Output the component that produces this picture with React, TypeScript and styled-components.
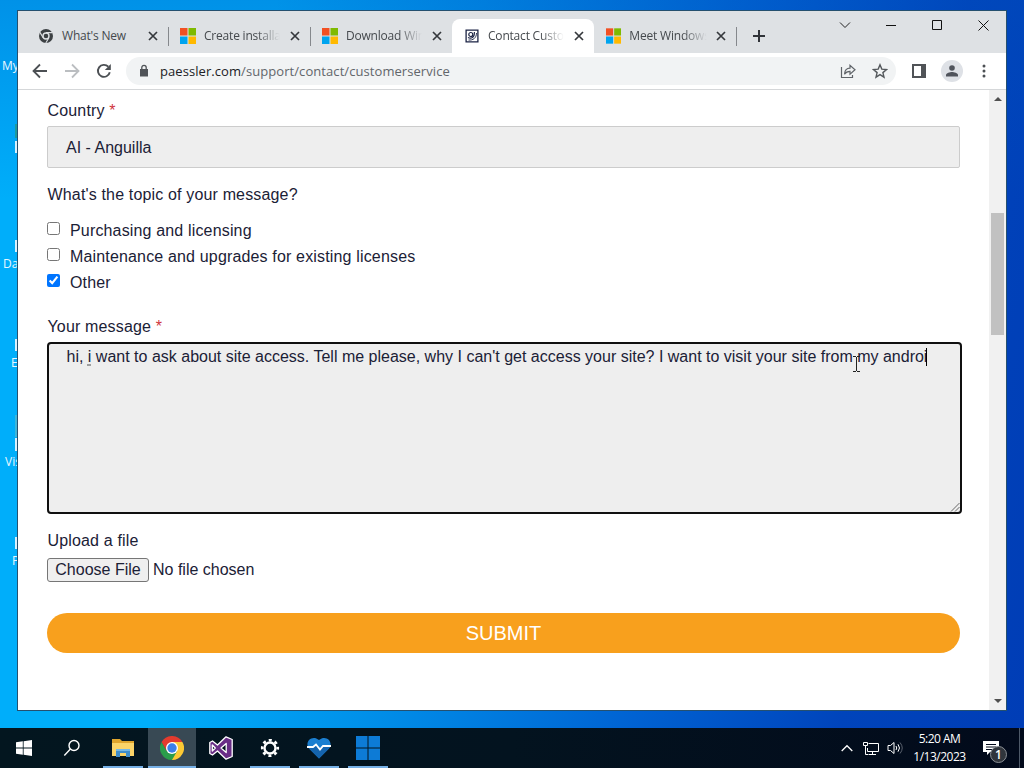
import React from 'react';
import styled, { createGlobalStyle } from 'styled-components';

const GlobalStyle = createGlobalStyle`
  * {
    box-sizing: border-box;
  }
  body {
    margin: 0;
    overflow: hidden;
  }
`;

const uiFont = "'Open Sans', 'Noto Sans', sans-serif";
const pageFont = "'Liberation Sans', Arial, sans-serif";

const Screen = styled.div`
  display: flex;
  flex-direction: column;
  width: 1024px;
  height: 768px;
  overflow: hidden;
  font-family: ${uiFont};
`;

const Desktop = styled.div`
  position: relative;
  display: flex;
  height: 728px;
  padding: 10px 17px 17px 17px;
  background:
    linear-gradient(180deg, rgba(0, 80, 190, 0.3), rgba(0, 120, 230, 0) 200px),
    linear-gradient(100deg, #00aefa 0%, #00aefa 24%, #0091ea 42%, #0062d2 66%, #0044bb 84%, #003db6 100%);
`;

const DesktopLabel = styled.span<{ $x: number; $y: number }>`
  position: absolute;
  left: ${p => p.$x}px;
  top: ${p => p.$y}px;
  font-size: 12px;
  line-height: 16px;
  color: #e8f7ff;
`;

const DesktopIcon = styled.span<{ $y: number; $h: number; $color?: string }>`
  position: absolute;
  left: 15px;
  top: ${p => p.$y}px;
  width: 2px;
  height: ${p => p.$h}px;
  background: ${p => p.$color || '#d9f1fd'};
`;

const Window = styled.div`
  position: relative;
  display: flex;
  flex-direction: column;
  width: 990px;
  height: 701px;
  border: 1px solid #25506f;
  background: #fff;
`;

const TabStrip = styled.div`
  display: flex;
  height: 42px;
  padding-left: 8px;
  background: #dee1e4;
`;

const Tab = styled.div<{ $active?: boolean; $divider?: boolean }>`
  position: relative;
  display: flex;
  align-items: center;
  width: 142px;
  height: 34px;
  margin-top: 8px;
  padding: 0 7px 0 12px;
  border-radius: 8px 8px 0 0;
  background: ${p => (p.$active ? '#fff' : 'transparent')};

  &::after {
    content: '';
    position: absolute;
    right: -1px;
    top: 8px;
    width: 1px;
    height: 19px;
    background: ${p => (p.$divider ? '#85888c' : 'transparent')};
  }
`;

const TabTitle = styled.span<{ $fade?: boolean }>`
  flex: 1;
  margin-left: 8px;
  white-space: nowrap;
  font-size: 12px;
  line-height: 18px;
  letter-spacing: -0.2px;
  color: #45494d;
  mask-image: ${p => (p.$fade ? 'linear-gradient(90deg, #000 66%, transparent 96%)' : 'none')};
`;

const TabClose = styled.span`
  display: flex;
  justify-content: center;
  width: 16px;
  margin-left: 4px;
`;

const NewTab = styled.div`
  display: flex;
  align-items: center;
  justify-content: center;
  width: 46px;
  height: 34px;
  margin-top: 8px;
`;

const WindowControls = styled.div`
  display: flex;
  margin-left: auto;
  height: 28px;
`;

const WindowButton = styled.span`
  display: flex;
  align-items: center;
  justify-content: center;
  width: 46px;
`;

const Toolbar = styled.div`
  display: flex;
  align-items: center;
  height: 37px;
  padding: 0 6px;
  border-bottom: 1px solid #d5d7d9;
`;

const ToolButton = styled.span<{ $w?: number }>`
  display: flex;
  align-items: center;
  justify-content: center;
  width: ${p => p.$w || 32}px;
  height: 32px;
`;

const AddressBar = styled.div`
  display: flex;
  align-items: center;
  width: 770px;
  height: 28px;
  margin: 0 4px 0 6px;
  padding: 0 0 0 11px;
  border-radius: 14px;
  background: #f1f3f4;
`;

const Url = styled.span`
  flex: 1;
  margin-left: 9px;
  font-size: 13px;
  line-height: 20px;
  letter-spacing: 0.07px;
  color: #62666b;

  b {
    font-weight: 400;
    color: #202124;
  }
`;

const Avatar = styled.span`
  display: flex;
  align-items: center;
  justify-content: center;
  width: 22px;
  height: 22px;
  margin: 0 5px 0 4px;
  border-radius: 50%;
  background: #dee1e6;
`;

const Viewport = styled.div`
  display: flex;
  flex: 1;
`;

const Form = styled.div`
  flex: 1;
  padding: 9px 27px 0 29px;
  font-family: ${pageFont};
  font-size: 16px;
  line-height: 24px;
  color: #1b2136;
`;

const Label = styled.div<{ $top?: number }>`
  margin-top: ${p => p.$top || 0}px;
  padding-left: 0.5px;
  letter-spacing: 0.16px;

  i {
    font-style: normal;
    color: #d0353d;
  }
`;

const Select = styled.div`
  width: 913px;
  height: 42px;
  margin-top: 3px;
  padding: 0 18px;
  border: 1px solid #ccc;
  border-radius: 2px;
  background: #eee;
  line-height: 42px;
`;

const Options = styled.div`
  margin-top: 11px;
`;

const Option = styled.label`
  display: flex;
  height: 26px;
  line-height: 26px;
  letter-spacing: 0.16px;

  input {
    width: 13px;
    height: 13px;
    margin: 4px 10px 0 0;
  }
`;

const Message = styled.div`
  position: relative;
  width: 915px;
  height: 172px;
  margin-top: 3px;
  padding: 1px 17.5px 0;
  border: 2px solid #101010;
  border-radius: 4px;
  background: #eee;
  white-space: nowrap;

  u {
    text-decoration: underline dotted #8a8a8a;
    text-underline-offset: 3px;
  }
`;

const Caret = styled.span`
  display: inline-block;
  width: 1px;
  height: 18px;
  margin-left: -1px;
  vertical-align: -4px;
  background: #000;
`;

const Grip = styled.svg`
  position: absolute;
  right: 0;
  bottom: 0;
`;

const Pointer = styled.svg`
  position: absolute;
  left: 804px;
  top: 12px;
`;

const FileRow = styled.div`
  display: flex;
  align-items: center;
  margin-top: 5px;
`;

const FileButton = styled.button`
  width: 102px;
  height: 24px;
  margin: 0 4px 0 0;
  padding: 0;
  border: 1px solid #767676;
  border-radius: 3px;
  background: #efefef;
  font: 16px/20px ${pageFont};
  color: #1b2136;
  white-space: nowrap;
`;

const Submit = styled.button`
  display: block;
  width: 913px;
  height: 40px;
  margin-top: 31px;
  padding: 0;
  border: 0;
  border-radius: 20px;
  background: #f8a01d;
  font: 20px/40px ${pageFont};
  color: #fff;
`;

const Scrollbar = styled.div`
  display: flex;
  flex-direction: column;
  align-items: center;
  width: 17px;
  background: #f1f1f1;
`;

const ScrollArrow = styled.span<{ $down?: boolean }>`
  width: 0;
  height: 0;
  margin: ${p => (p.$down ? 'auto 0 7px' : '7px 0 0')};
  border: 4px solid transparent;
  border-top: ${p => (p.$down ? '4px solid #505050' : '0')};
  border-bottom: ${p => (p.$down ? '0' : '4px solid #505050')};
`;

const Thumb = styled.span`
  width: 13px;
  height: 122px;
  margin-top: 112px;
  background: #c1c1c1;
`;

const Taskbar = styled.div`
  display: flex;
  height: 40px;
  background: linear-gradient(90deg, #03161f, #03131f 50%, #020a1b);
`;

const TaskButton = styled.span<{ $active?: boolean; $running?: boolean }>`
  position: relative;
  display: flex;
  align-items: center;
  justify-content: center;
  width: 48px;
  height: 40px;
  background: ${p => (p.$active ? '#384954' : 'transparent')};

  &::after {
    content: '';
    position: absolute;
    bottom: 0;
    left: ${p => (p.$active ? 0 : 4)}px;
    right: ${p => (p.$active ? 0 : 4)}px;
    height: 2px;
    background: ${p => (p.$running ? '#76b0e6' : 'transparent')};
  }
`;

const Apps = styled.div`
  display: flex;
  gap: 1px;
  margin-left: 3px;
`;

const Tray = styled.div`
  display: flex;
  align-items: center;
  margin-left: auto;
`;

const TrayIcon = styled.span`
  display: flex;
  justify-content: center;
  width: 24px;
`;

const Clock = styled.div`
  width: 65px;
  font-size: 12px;
  line-height: 18px;
  letter-spacing: -0.5px;
  text-align: center;
  color: #fff;
`;

const Notifications = styled.span`
  position: relative;
  display: flex;
  justify-content: center;
  width: 38px;
`;

const Badge = styled.span`
  position: absolute;
  left: 18px;
  top: 6px;
  width: 17px;
  height: 17px;
  border: 1px solid #8b9096;
  border-radius: 50%;
  background: #30353c;
  font-size: 12px;
  font-weight: 600;
  line-height: 15px;
  text-align: center;
  color: #fff;
`;

const ShowDesktop = styled.span`
  width: 5px;
  height: 40px;
  margin-left: 9px;
  border-left: 1px solid #4e5968;
`;

const MicrosoftLogo = () => (
  <svg width="16" height="16" viewBox="0 0 16 16">
    <path fill="#f25022" d="M0 0h7.5v7.5H0z" />
    <path fill="#7fba00" d="M8.5 0H16v7.5H8.5z" />
    <path fill="#00a4ef" d="M0 8.5h7.5V16H0z" />
    <path fill="#ffb900" d="M8.5 8.5H16V16H8.5z" />
  </svg>
);

const ChromeMono = () => (
  <svg width="16" height="16" viewBox="0 0 16 16">
    <circle cx="8" cy="8" r="7" fill="#3c4043" />
    <path d="M8 4.6h6.4M5.1 9.7 2 4.4M10.9 9.7 7.8 15" stroke="#dee1e4" strokeWidth="1.1" />
    <circle cx="8" cy="8" r="3" fill="#3c4043" stroke="#dee1e4" strokeWidth="1.4" />
  </svg>
);

const PaesslerLogo = () => (
  <svg width="16" height="16" viewBox="0 0 16 16" fill="none" stroke="#1b2344">
    <path d="M2.100 2.100h11.800v11.800H2.100z" strokeWidth="1.300" />
    <circle cx="6.800" cy="6.500" r="2" strokeWidth="1.200" />
    <path d="M4 9.500c3 1.600 6.800.3 6.400-5.500" strokeWidth="1.100" />
    <path d="M4.500 12c4.500.5 8-2 8-7" strokeWidth="0.900" />
  </svg>
);

const ChromeLogo = () => (
  <svg width="24" height="24" viewBox="0 0 24 24">
    <path fill="#fcc934" d="M12 12V6h10.400A12 12 0 0 1 12 24z" />
    <path fill="#2a9d4a" d="M1.600 6A12 12 0 0 0 12 24l5.200-9H12L6.800 15z" />
    <path fill="#e33b2e" d="M1.600 6A12 12 0 0 1 22.400 6H12v6l-5.200 3z" />
    <circle cx="12" cy="12" r="6" fill="#fff" />
    <circle cx="12" cy="12" r="4.700" fill="#3b7fe8" />
  </svg>
);

const tabs = [
  { title: "What's New", icon: <ChromeMono />, divider: true },
  { title: 'Create installa', icon: <MicrosoftLogo />, divider: true, fade: true },
  { title: 'Download Win', icon: <MicrosoftLogo />, fade: true },
  { title: 'Contact Custo', icon: <PaesslerLogo />, active: true, fade: true },
  { title: 'Meet Windows', icon: <MicrosoftLogo />, divider: true, fade: true },
];

const topics = [
  { label: 'Purchasing and licensing', checked: false },
  { label: 'Maintenance and upgrades for existing licenses', checked: false },
  { label: 'Other', checked: true },
];

const desktopLabels = [
  { text: 'My', x: 2, y: 58 },
  { text: 'Da', x: 3, y: 256 },
  { text: 'E', x: 11, y: 355 },
  { text: 'Vis', x: 5, y: 454 },
  { text: 'P', x: 12, y: 553 },
];

function Browser() {
  return (
    <Window>
      <TabStrip>
        {tabs.map(tab => (
          <Tab key={tab.title} $active={tab.active} $divider={tab.divider}>
            {tab.icon}
            <TabTitle $fade={tab.fade}>{tab.title}</TabTitle>
            <TabClose>
              <svg width="10" height="10" viewBox="0 0 10 10" stroke="#35383c" strokeWidth="1.7">
                <path d="m1 1 8 8M9 1 1 9" />
              </svg>
            </TabClose>
          </Tab>
        ))}
        <NewTab>
          <svg width="12" height="12" viewBox="0 0 12 12" stroke="#303338" strokeWidth="2">
            <path d="M6 0v12M0 6h12" />
          </svg>
        </NewTab>
        <WindowControls>
          <WindowButton>
            <svg width="12" height="8" viewBox="0 0 12 8" fill="none" stroke="#222">
              <path d="m1 1.500 5 5 5-5" />
            </svg>
          </WindowButton>
          <WindowButton>
            <svg width="10" height="10" viewBox="0 0 10 10" stroke="#111">
              <path d="M0 5.500h10" />
            </svg>
          </WindowButton>
          <WindowButton>
            <svg width="10" height="10" viewBox="0 0 10 10" fill="none" stroke="#111">
              <path d="M.5.5h9v9h-9z" />
            </svg>
          </WindowButton>
          <WindowButton>
            <svg width="11" height="11" viewBox="0 0 11 11" stroke="#111">
              <path d="m.5.5 10 10M10.500.5l-10 10" />
            </svg>
          </WindowButton>
        </WindowControls>
      </TabStrip>
      <Toolbar>
        <ToolButton>
          <svg width="16" height="16" viewBox="0 0 16 16" fill="none" stroke="#4c5054" strokeWidth="1.8">
            <path d="M15 8H2M8 1.500 1.500 8 8 14.500" />
          </svg>
        </ToolButton>
        <ToolButton>
          <svg width="16" height="16" viewBox="0 0 16 16" fill="none" stroke="#bbbec1" strokeWidth="1.8">
            <path d="M1 8h13M8 1.500 14.500 8 8 14.500" />
          </svg>
        </ToolButton>
        <ToolButton>
          <svg width="16" height="16" viewBox="0 0 16 16" fill="none">
            <path d="M13.800 9.300A6 6 0 1 1 12.300 3.700" stroke="#4c5054" strokeWidth="1.900" />
            <path d="M14.800 1v6H8.800z" fill="#4c5054" />
          </svg>
        </ToolButton>
        <AddressBar>
          <svg width="14" height="14" viewBox="0 0 14 14" fill="none">
            <path fill="#505458" d="M3 5h8v7.500H3z" />
            <path d="M4.800 6V3.600a2.200 2.200 0 0 1 4.400 0V6" stroke="#505458" strokeWidth="1.300" />
          </svg>
          <Url>
            <b>paessler.com</b>/support/contact/customerservice
          </Url>
          <ToolButton>
            <svg width="16" height="16" viewBox="0 0 16 16" fill="none" stroke="#5f6368" strokeWidth="1.200">
              <path d="M1.500 4v10.500h11V12" />
              <path d="M4.500 11.200c.3-4.200 2.500-6 5.500-6V2.300L15 6.800l-5 4.300V8.300c-2.600 0-4.200.8-5.500 2.900z" />
            </svg>
          </ToolButton>
          <ToolButton>
            <svg width="16" height="16" viewBox="0 0 16 16" fill="none" stroke="#54585c" strokeWidth="1.400">
              <path d="m8 1.800 1.800 4.300 4.700.4-3.600 3.100 1.100 4.600L8 11.700l-4 2.500 1.100-4.600-3.600-3.100 4.700-.4z" />
            </svg>
          </ToolButton>
        </AddressBar>
        <ToolButton $w={37}>
          <svg width="14" height="14" viewBox="0 0 14 14">
            <path fill="#505357" fillRule="evenodd" d="M0 0h14v14H0zM2 2v10h7V2z" />
          </svg>
        </ToolButton>
        <Avatar>
          <svg width="14" height="14" viewBox="0 0 14 14" fill="#50545c">
            <circle cx="7" cy="4" r="2.800" />
            <path d="M1 12.500V11c0-2 4-3 6-3s6 1 6 3v1.500z" />
          </svg>
        </Avatar>
        <ToolButton>
          <svg width="4" height="14" viewBox="0 0 4 14" fill="#4c5054">
            <circle cx="2" cy="2" r="1.500" />
            <circle cx="2" cy="7" r="1.500" />
            <circle cx="2" cy="12" r="1.500" />
          </svg>
        </ToolButton>
      </Toolbar>
      <Viewport>
        <Form>
          <Label>
            Country <i>*</i>
          </Label>
          <Select>AI - Anguilla</Select>
          <Label $top={15}>What's the topic of your message?</Label>
          <Options>
            {topics.map(topic => (
              <Option key={topic.label}>
                <input type="checkbox" checked={topic.checked} readOnly />
                {topic.label}
              </Option>
            ))}
          </Options>
          <Label $top={19}>
            Your message <i>*</i>
          </Label>
          <Message>
            hi, <u>i</u> want to ask about site access. Tell me please, why I can't get access your site? I want to visit
            your site from my androi
            <Caret />
            <Pointer width="7" height="16" viewBox="0 0 7 16" fill="none" stroke="#222">
              <path d="M0 .5h3M4 .5h3M3.500 1v14M0 15.500h3M4 15.500h3" />
            </Pointer>
            <Grip width="10" height="10" viewBox="0 0 10 10" stroke="#444" strokeWidth="0.8">
              <path d="M1 9.500 9.500 1M5 9.500 9.500 5" />
            </Grip>
          </Message>
          <Label $top={15}>Upload a file</Label>
          <FileRow>
            <FileButton>Choose File</FileButton>
            No file chosen
          </FileRow>
          <Submit>SUBMIT</Submit>
        </Form>
        <Scrollbar>
          <ScrollArrow />
          <Thumb />
          <ScrollArrow $down />
        </Scrollbar>
      </Viewport>
    </Window>
  );
}

function SystemBar() {
  return (
    <Taskbar>
      <TaskButton>
        <svg width="16" height="16" viewBox="0 0 16 16" fill="#fff">
          <path d="M0 2.200 6.800 1.300v6.300H0zM7.600 1.200 16 0v7.600H7.600zM0 8.400h6.800v6.300L0 13.800zM7.600 8.400H16V16l-8.400-1.200z" />
        </svg>
      </TaskButton>
      <TaskButton>
        <svg width="18" height="18" viewBox="0 0 18 18" fill="none" stroke="#fff" strokeWidth="1.400">
          <circle cx="11" cy="6.500" r="5" />
          <path d="M7.400 10.100 1.300 16.500" />
        </svg>
      </TaskButton>
      <Apps>
        <TaskButton $running>
          <svg width="22" height="20" viewBox="0 0 22 20">
            <path fill="#dfa52d" d="M0 1h8l2 2h12v14H0z" />
            <path fill="#fbd468" d="M0 5h22v13H0z" />
            <path fill="#3f8dcb" d="M4 11h14v8h-4v-4H8v4H4z" />
            <path fill="#75b8e6" d="M4 11h14v2H4z" />
          </svg>
        </TaskButton>
        <TaskButton $active $running>
          <ChromeLogo />
        </TaskButton>
        <TaskButton>
          <svg width="24" height="24" viewBox="0 0 24 24">
            <path
              fill="#692d86"
              fillRule="evenodd"
              stroke="#fff"
              strokeWidth="1.300"
              strokeLinejoin="round"
              d="M17 .8 23.200 3.500v17L17 23.200 8.500 15l-5 4L.8 17.500v-11L3.500 5l5 4zM17.200 7.500 12 12l5.200 4.500zM3.300 9v6l3-3z"
            />
          </svg>
        </TaskButton>
        <TaskButton $running>
          <svg width="20" height="20" viewBox="0 0 20 20" fill="none" stroke="#fff">
            <circle cx="10" cy="10" r="5.500" strokeWidth="2.400" />
            <circle cx="10" cy="10" r="7.800" strokeWidth="2.600" strokeDasharray="3 3.126" strokeDashoffset="1.500" />
          </svg>
        </TaskButton>
        <TaskButton $running>
          <svg width="24" height="22" viewBox="0 0 24 22">
            <path fill="#1b7fd1" d="M12 21.500 2 11.500C-3 5 5-3 12 3c7-6 15 2 10 8.500z" />
            <path fill="#1564ae" d="M1 10h6l2-2 4 4 3-2h7l-1 1.500-10 10-10-10z" />
            <path d="M0 10h6l3-2.500 4 5 3-3.500h8" fill="none" stroke="#fff" strokeWidth="1.800" />
          </svg>
        </TaskButton>
        <TaskButton $running>
          <svg width="24" height="24" viewBox="0 0 24 24" fill="#0d7bd6">
            <path d="M0 0h11.500v11.500H0zM12.500 0H24v11.500H12.500zM0 12.500h11.500V24H0zM12.500 12.500H24V24H12.500z" />
          </svg>
        </TaskButton>
      </Apps>
      <Tray>
        <TrayIcon>
          <svg width="12" height="8" viewBox="0 0 12 8" fill="none" stroke="#fff" strokeWidth="1.300">
            <path d="m.7 7 5.300-5.300L11.300 7" />
          </svg>
        </TrayIcon>
        <TrayIcon>
          <svg width="17" height="15" viewBox="0 0 17 15" fill="none" stroke="#fff">
            <path d="M5.500 2.500h10v8h-11M6 13.500h7M9.500 10.500v3M2.500 5v8.500h3M4.500 7v3.500" />
            <path d="M.5 1.500h4v3h-4z" />
          </svg>
        </TrayIcon>
        <TrayIcon>
          <svg width="17" height="14" viewBox="0 0 17 14" fill="none" stroke="#fff">
            <path d="M1 4.500h2.500L7 1.500v11L3.500 9.500H1z" />
            <path d="M9 5q1.500 2 0 4M11 3.300q3 3.700 0 7.400" />
            <path d="M13 1.500q4.500 5.500 0 11" stroke="#59606c" />
          </svg>
        </TrayIcon>
        <Clock>
          <div>5:20 AM</div>
          <div>1/13/2023</div>
        </Clock>
        <Notifications>
          <svg width="16" height="16" viewBox="0 0 16 16">
            <path fill="#fff" d="M0 1h16v11H7l-3 3v-3H0z" />
            <path d="M3 4.500h10M3 7h10M3 9.500h7" stroke="#020a1b" />
          </svg>
          <Badge>1</Badge>
        </Notifications>
        <ShowDesktop />
      </Tray>
    </Taskbar>
  );
}

export default function App() {
  return (
    <Screen>
      <GlobalStyle />
      <Desktop>
        {desktopLabels.map(({ text, x, y }) => (
          <DesktopLabel key={text} $x={x} $y={y}>
            {text}
          </DesktopLabel>
        ))}
        <DesktopIcon $y={124} $h={14} $color="#1d9a9c" />
        <DesktopIcon $y={141} $h={12} />
        <DesktopIcon $y={240} $h={12} />
        <DesktopIcon $y={339} $h={12} />
        <DesktopIcon $y={415} $h={22} $color="#3fb5d8" />
        <DesktopIcon $y={438} $h={13} />
        <DesktopIcon $y={537} $h={12} />
        <Browser />
      </Desktop>
      <SystemBar />
    </Screen>
  );
}
